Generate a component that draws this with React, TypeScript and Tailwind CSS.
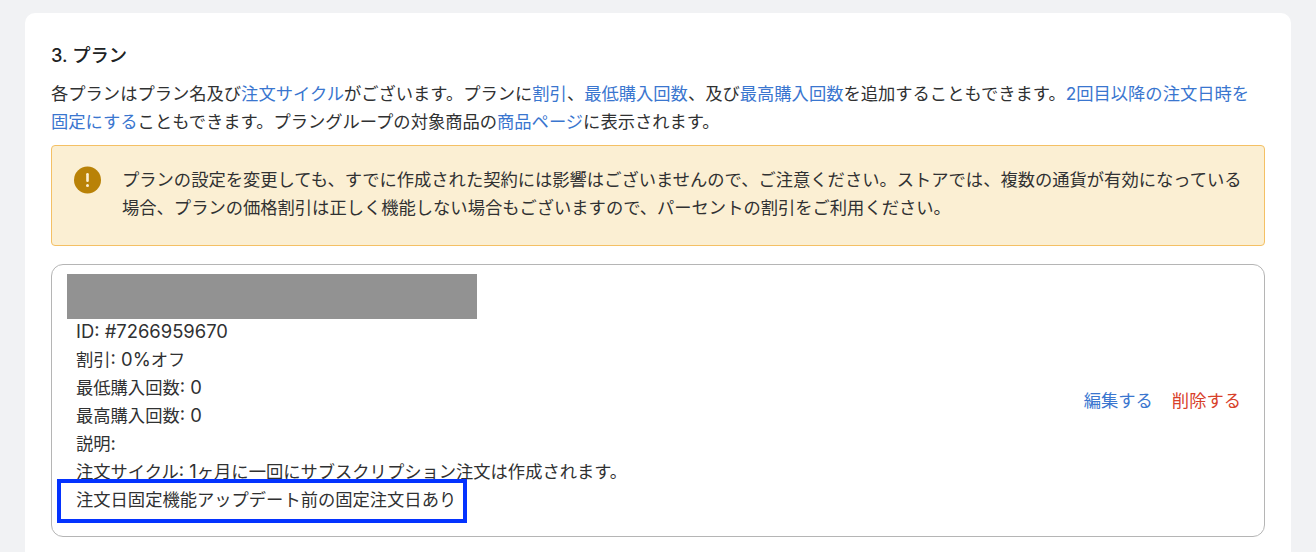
export default function App() {
  const font = { fontFamily: '"Inter", "Noto Sans CJK JP", sans-serif' };
  const A = ({ children }: { children: React.ReactNode }) => <span className="text-[#3a76cf]">{children}</span>;
  const L = ({ children }: { children: React.ReactNode }) => <span className="text-[18.4px] leading-none">{children}</span>;
  return (
    <div className="h-[552px] overflow-hidden bg-[#f1f2f4] pt-[13px] pl-[25px] pr-[25px] text-[#303132]" style={font}>
      <div className="h-[600px] rounded-t-[10px] bg-white pt-[26px] pl-[26px] pr-[26px]">
        <h2 className="text-[18.3px] font-medium leading-[32px] text-[#202223]">3. プラン</h2>
        <p className="mt-[9px] pr-[8px] text-[17.3px] leading-[28px]">
          各プランはプラン名及び<A>注文サイクル</A>がございます。プランに<A>割引</A>、<A>最低購入回数</A>、及び<A>最高購入回数</A>を追加することもできます。<A>2回目以降の注文日時を固定にする</A>こともできます。プラングループの対象商品の<A>商品ページ</A>に表示されます。
        </p>
        <div className="mt-[9px] flex h-[101px] w-[1214px] rounded-[4px] border border-[#f4c064] bg-[#fbefd3] pl-[21px] pt-[20px]">
          <svg width="28" height="28" viewBox="0 0 28 28" className="shrink-0">
            <circle cx="14.5" cy="14" r="13.5" fill="#b98207" />
            <rect x="13.2" y="7" width="2.6" height="9" rx="1.3" fill="#fbefd3" />
            <circle cx="14.5" cy="19.5" r="1.5" fill="#fbefd3" />
          </svg>
          <p className="ml-[21px] w-[1130px] text-[17.3px] leading-[28px]">
            プランの設定を変更しても、すでに作成された契約には影響はございませんので、ご注意ください。ストアでは、複数の通貨が有効になっている場合、プランの価格割引は正しく機能しない場合もございますので、パーセントの割引をご利用ください。
          </p>
        </div>
        <div className="relative mt-[18px] flex h-[273px] w-[1214px] items-center justify-between rounded-[12px] border border-[#b5b5b5] pl-[24px] pr-[23px]">
          <div className="absolute left-[15px] top-[9px] h-[45px] w-[410px] bg-[#929292]" />
          <div className="self-start pt-[53px] text-[17.3px] leading-[28px]">
            <div className="h-[28px]"><L>ID: #7266959670</L></div>
            <div className="h-[28px]">割引<L>: 0%</L>オフ</div>
            <div className="h-[28px]">最低購入回数<L>: 0</L></div>
            <div className="h-[28px]">最高購入回数<L>: 0</L></div>
            <div className="h-[28px]">説明<L>:</L></div>
            <div className="h-[28px]">注文サイクル<L>: 1</L>ヶ月に一回にサブスクリプション注文は作成されます。</div>
            <div className="h-[28px]">注文日固定機能アップデート前の固定注文日あり</div>
          </div>
          <div className="flex gap-[19px] text-[17.3px] leading-[28px]">
            <span className="text-[#3a76cf]">編集する</span>
            <span className="text-[#d8402a]">削除する</span>
          </div>
          <div className="absolute left-[5px] top-[214px] h-[44px] w-[410px] border-[4px] border-[#0433ff]" />
        </div>
      </div>
    </div>
  );
}
